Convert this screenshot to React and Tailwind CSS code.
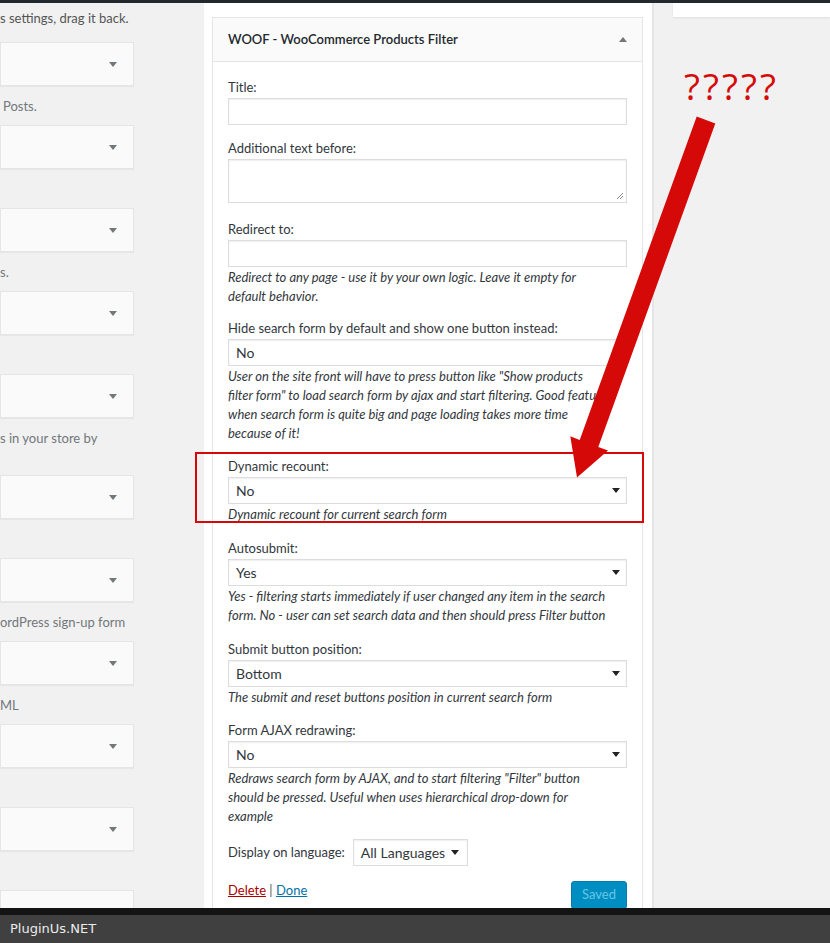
import React from "react";

const Caret = ({ className = "", up = false }) => (
  <svg width="8" height="5" viewBox="0 0 8 5" className={className}>
    <path d={up ? "M0 5h8L4 0z" : "M0 0h8L4 5z"} fill="currentColor" />
  </svg>
);

const leftItems = [
  { desc: "Posts.", pad: "pl-[3px]" },
  { desc: "" },
  { desc: "s." },
  { desc: "" },
  { desc: "s in your store by", tall: true },
  { desc: "" },
  { desc: "ordPress sign-up form" },
  { desc: "ML" },
  { desc: "" },
  { desc: "" },
];

const LeftBox = () => (
  <div className="flex h-[44px] shrink-0 items-center justify-end border border-[#e5e5e5] bg-[#fafafa] pr-[16px] text-[#72777c] shadow-[0_1px_1px_rgba(0,0,0,0.04)]">
    <Caret />
  </div>
);

const Control = ({ value, arrow = true, className = "" }) => (
  <div
    className={`my-px flex h-[27px] items-center justify-between border border-[#ddd] bg-white pl-[7px] pr-[6px] text-[14px] text-[#32373c] shadow-[inset_0_1px_2px_rgba(0,0,0,0.07)] ${className}`}
  >
    <span>{value}</span>
    {arrow && <Caret className="text-[#222]" />}
  </div>
);

const Desc = ({ lines }) => (
  <div className="whitespace-nowrap text-[13px] italic leading-[19px] text-[#32373c]">
    {lines.map((l, i) => (
      <div key={i}>{l}</div>
    ))}
  </div>
);

const Field = ({ label, children, desc, mt }) => (
  <div className={mt}>
    <div className="text-[13px] leading-[19px] text-[#32373c]">{label}</div>
    {children}
    {desc && <Desc lines={desc} />}
  </div>
);

export default function App() {
  return (
    <div className="relative flex h-[943px] w-[830px] flex-col overflow-hidden bg-[#f1f1f1] font-['Lato','Noto_Sans',sans-serif]">
      <div className="h-[3px] shrink-0 bg-[#23282d]" />

      <div className="flex min-h-0 flex-1">
        {/* available widgets, cut off on the left */}
        <div className="w-[204px] shrink-0 overflow-hidden pr-[70px] pt-[6px]">
          <div className="whitespace-nowrap text-[13px] leading-[19px] text-[#555]">
            s settings, drag it back.
          </div>
          <div className="mt-[14px]">
            {leftItems.map((it, i) => (
              <div key={i}>
                <LeftBox />
                <div
                  className={`${it.tall ? "h-[57px]" : "h-[39px]"} whitespace-nowrap pt-[11px] text-[13px] leading-[19px] text-[#72777c] ${it.pad || ""}`}
                >
                  {it.desc}
                </div>
              </div>
            ))}
            <LeftBox />
          </div>
        </div>

        {/* sidebar with the open widget */}
        <div className="w-[450px] shrink-0 border-r-2 border-[#e5e5e5] bg-white pl-[8px] pr-[9px] pt-[14px]">
          <div className="border border-[#e5e5e5] bg-white">
            <div className="flex h-[44px] items-center justify-between border-b border-[#e5e5e5] bg-[#fafafa] px-[15px]">
              <span className="text-[13px] font-semibold text-[#23282d]">
                WOOF - WooCommerce Products Filter
              </span>
              <Caret up className="text-[#72777c]" />
            </div>

            <div className="px-[15px] pt-[16px]">
              <Field label="Title:">
                <Control value="" arrow={false} />
              </Field>

              <Field label="Additional text before:" mt="mt-[14px]">
                <div className="relative my-px h-[44px] border border-[#ddd] bg-white shadow-[inset_0_1px_2px_rgba(0,0,0,0.07)]">
                  <svg width="8" height="8" viewBox="0 0 8 8" className="absolute bottom-[2px] right-[2px] text-[#888]">
                    <path d="M7 1L1 7M7 4L4 7" stroke="currentColor" strokeWidth="1" />
                  </svg>
                </div>
              </Field>

              <Field
                label="Redirect to:"
                mt="mt-[17px]"
                desc={[
                  "Redirect to any page - use it by your own logic. Leave it empty for",
                  "default behavior.",
                ]}
              >
                <Control value="" arrow={false} />
              </Field>

              <Field
                label="Hide search form by default and show one button instead:"
                mt="mt-[13px]"
                desc={[
                  'User on the site front will have to press button like "Show products',
                  'filter form" to load search form by ajax and start filtering. Good feature',
                  "when search form is quite big and page loading takes more time",
                  "because of it!",
                ]}
              >
                <Control value="No" arrow={false} />
              </Field>

              <Field
                label="Dynamic recount:"
                mt="mt-[14px]"
                desc={["Dynamic recount for current search form"]}
              >
                <Control value="No" />
              </Field>

              <Field
                label="Autosubmit:"
                mt="mt-[15px]"
                desc={[
                  "Yes - filtering starts immediately if user changed any item in the search",
                  "form. No - user can set search data and then should press Filter button",
                ]}
              >
                <Control value="Yes" />
              </Field>

              <Field
                label="Submit button position:"
                mt="mt-[15px]"
                desc={["The submit and reset buttons position in current search form"]}
              >
                <Control value="Bottom" />
              </Field>

              <Field
                label="Form AJAX redrawing:"
                mt="mt-[14px]"
                desc={[
                  'Redraws search form by AJAX, and to start filtering "Filter" button',
                  "should be pressed. Useful when uses hierarchical drop-down for",
                  "example",
                ]}
              >
                <Control value="No" />
              </Field>

              <div className="mt-[12px] flex items-center gap-[8px] text-[13px] text-[#32373c]">
                <span>Display on language:</span>
                <Control value="All Languages" className="w-[115px] !pr-[8px]" />
              </div>

              <div className="mt-[14px] flex items-start justify-between">
                <div className="text-[13px] leading-[19px] text-[#555]">
                  <a className="text-[#a00] underline">Delete</a> |{" "}
                  <a className="text-[#0073aa] underline">Done</a>
                </div>
                <button className="h-[28px] w-[56px] rounded-[3px] border border-[#007cb2] bg-[#008ec2] text-[13px] text-[#66c6e4]">
                  Saved
                </button>
              </div>
              <div className="h-[40px]" />
            </div>
          </div>
        </div>

        {/* right column */}
        <div className="min-w-0 flex-1 pl-[19px]">
          <div className="h-[14px] bg-white shadow-[0_1px_2px_rgba(0,0,0,0.08)]" />
        </div>
      </div>

      {/* footer watermark bar */}
      <div className="h-[7px] shrink-0 bg-[#141414]" />
      <div className="flex h-[28px] shrink-0 items-center bg-[#404040] pl-[10px] font-['DejaVu_Sans',sans-serif] text-[13px] text-[#ececec]">
        PluginUs.NET
      </div>

      {/* annotation overlay */}
      <div className="absolute left-[195px] top-[452px] h-[71px] w-[449px] border-2 border-[#d60909]" />
      <div className="absolute left-[684px] top-[62px] font-['Open_Sans',sans-serif] text-[37px] leading-[48px] tracking-[3px] text-[#d60909]">
        ?????
      </div>
      <svg className="pointer-events-none absolute left-0 top-0" width="830" height="943">
        <polygon
          points="696.7,116.4 715.3,123.6 598.3,447.1 608,450.5 577,477.5 570.3,436.3 579.7,439.9"
          fill="#d60909"
        />
      </svg>
    </div>
  );
}
